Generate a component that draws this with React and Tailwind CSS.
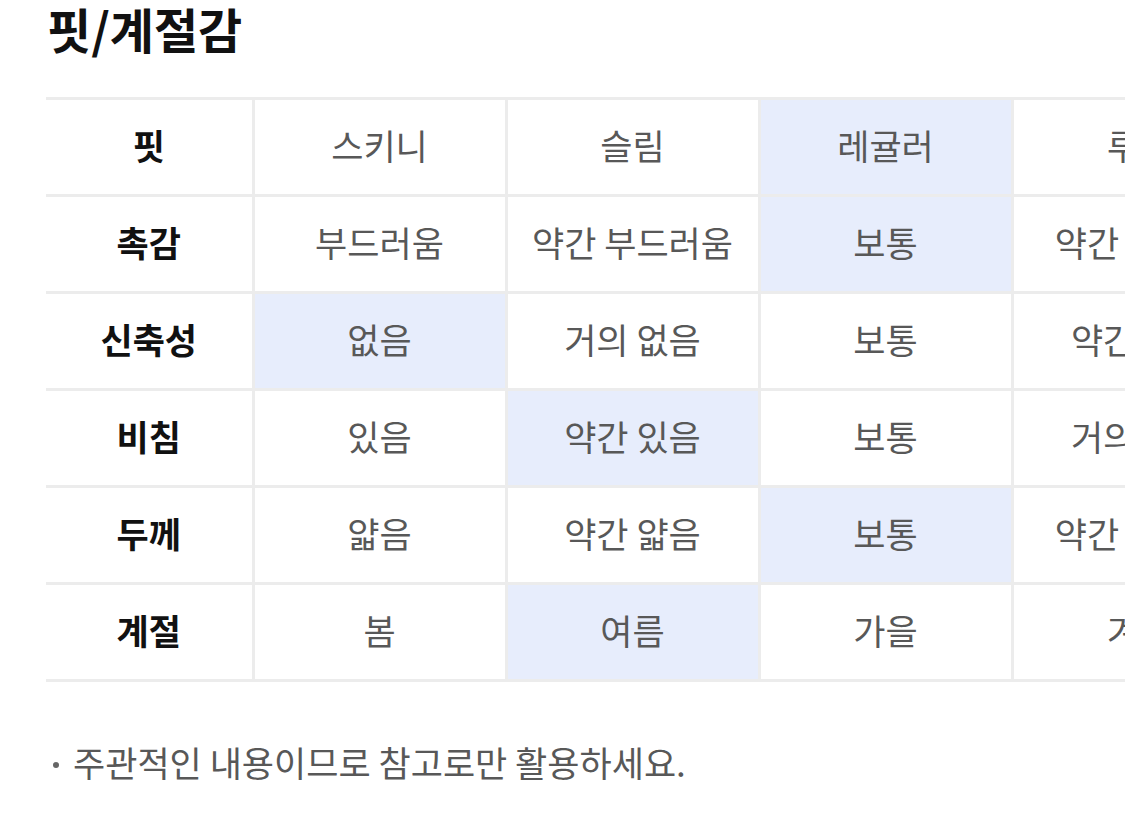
import React from 'react';

const rows = [
  { label: '핏', values: ['스키니', '슬림', '레귤러', '루즈'], active: 2 },
  { label: '촉감', values: ['부드러움', '약간 부드러움', '보통', '약간 딱딱함'], active: 2 },
  { label: '신축성', values: ['없음', '거의 없음', '보통', '약간 있음'], active: 0 },
  { label: '비침', values: ['있음', '약간 있음', '보통', '거의 없음'], active: 1 },
  { label: '두께', values: ['얇음', '약간 얇음', '보통', '약간 두꺼움'], active: 2 },
  { label: '계절', values: ['봄', '여름', '가을', '겨울'], active: 1 },
];

const App = () => {
  return (
    <div
      className="w-[1125px] h-[823px] overflow-hidden bg-white pl-[46px]"
      style={{ fontFamily: '"Noto Sans CJK KR", "Noto Sans", sans-serif' }}
    >
      <h2 className="text-[48px] font-bold leading-none text-[#111] pt-[4px] pl-[1px]">핏/계절감</h2>

      <table className="mt-[45px] border-collapse table-fixed w-[1219px]">
        <tbody>
          {rows.map((row) => (
            <tr key={row.label} className="border-y-[3px] border-[#ececec]">
              <th className="w-[207px] h-[97px] pb-[4px] text-[35px] font-bold text-[#111] text-center">
                {row.label}
              </th>
              {row.values.map((v, i) => (
                <td
                  key={v + i}
                  className={`w-[253px] h-[97px] pb-[4px] border-l-[3px] border-[#ececec] text-center text-[35px] text-[#585858] whitespace-nowrap ${
                    i === row.active ? 'bg-[#e7edfc]' : 'bg-white'
                  }`}
                >
                  {v}
                </td>
              ))}
            </tr>
          ))}
        </tbody>
      </table>

      <div className="mt-[62px] flex items-center gap-[14px] text-[35px] text-[#585858] leading-none">
        <span className="w-[6px] h-[6px] rounded-full bg-[#666] ml-[7px] mt-[6px]" />
        <span>주관적인 내용이므로 참고로만 활용하세요.</span>
      </div>
    </div>
  );
};

export default App;
